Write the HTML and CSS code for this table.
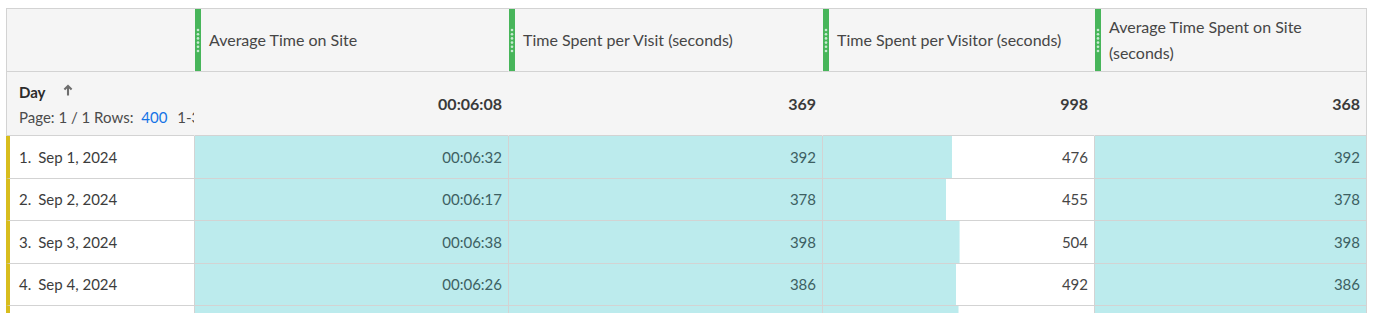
FILE: index.html
```html
<!DOCTYPE html>
<html lang="en">
<head>
<meta charset="utf-8">
<title>Freeform table</title>
<link rel="stylesheet" href="styles.css">
</head>
<body>
<div class="table">
  <div class="row head">
    <div class="cell corner"></div>
    <div class="cell hcol">
      <span class="grip"><svg width="4" height="25" viewBox="0 0 4 25"><circle cx="2" cy="2" r="1.3"/><circle cx="2" cy="6.2" r="1.3"/><circle cx="2" cy="10.4" r="1.3"/><circle cx="2" cy="14.6" r="1.3"/><circle cx="2" cy="18.8" r="1.3"/><circle cx="2" cy="23" r="1.3"/></svg></span>
      <span class="htitle">Average Time on Site</span>
    </div>
    <div class="cell hcol">
      <span class="grip"><svg width="4" height="25" viewBox="0 0 4 25"><circle cx="2" cy="2" r="1.3"/><circle cx="2" cy="6.2" r="1.3"/><circle cx="2" cy="10.4" r="1.3"/><circle cx="2" cy="14.6" r="1.3"/><circle cx="2" cy="18.8" r="1.3"/><circle cx="2" cy="23" r="1.3"/></svg></span>
      <span class="htitle">Time Spent per Visit (seconds)</span>
    </div>
    <div class="cell hcol">
      <span class="grip"><svg width="4" height="25" viewBox="0 0 4 25"><circle cx="2" cy="2" r="1.3"/><circle cx="2" cy="6.2" r="1.3"/><circle cx="2" cy="10.4" r="1.3"/><circle cx="2" cy="14.6" r="1.3"/><circle cx="2" cy="18.8" r="1.3"/><circle cx="2" cy="23" r="1.3"/></svg></span>
      <span class="htitle">Time Spent per Visitor (seconds)</span>
    </div>
    <div class="cell hcol">
      <span class="grip"><svg width="4" height="25" viewBox="0 0 4 25"><circle cx="2" cy="2" r="1.3"/><circle cx="2" cy="6.2" r="1.3"/><circle cx="2" cy="10.4" r="1.3"/><circle cx="2" cy="14.6" r="1.3"/><circle cx="2" cy="18.8" r="1.3"/><circle cx="2" cy="23" r="1.3"/></svg></span>
      <span class="htitle">Average Time Spent on Site (seconds)</span>
    </div>
  </div>

  <div class="row summary">
    <div class="cell dim">
      <div class="dim-title">Day <svg class="sort" width="10" height="12" viewBox="0 0 10 12"><path d="M5 11.5V2.2M1.4 5.6L5 2l3.6 3.6" fill="none" stroke="#6e6e6e" stroke-width="2.1"/></svg></div>
      <div class="pager">Page: 1 / 1 Rows: <span class="link">400</span> <span class="range">1-30 of 30</span></div>
    </div>
    <div class="cell total">00:06:08</div>
    <div class="cell total">369</div>
    <div class="cell total">998</div>
    <div class="cell total">368</div>
  </div>

  <div class="row data">
    <div class="cell item"><span class="num">1.</span>Sep 1, 2024</div>
    <div class="cell val on" style="--w:100%">00:06:32</div>
    <div class="cell val on" style="--w:100%">392</div>
    <div class="cell val" style="--w:47.6%">476</div>
    <div class="cell val on" style="--w:100%">392</div>
  </div>
  <div class="row data">
    <div class="cell item"><span class="num">2.</span>Sep 2, 2024</div>
    <div class="cell val on" style="--w:100%">00:06:17</div>
    <div class="cell val on" style="--w:100%">378</div>
    <div class="cell val" style="--w:45.5%">455</div>
    <div class="cell val on" style="--w:100%">378</div>
  </div>
  <div class="row data">
    <div class="cell item"><span class="num">3.</span>Sep 3, 2024</div>
    <div class="cell val on" style="--w:100%">00:06:38</div>
    <div class="cell val on" style="--w:100%">398</div>
    <div class="cell val" style="--w:50.4%">504</div>
    <div class="cell val on" style="--w:100%">398</div>
  </div>
  <div class="row data">
    <div class="cell item"><span class="num">4.</span>Sep 4, 2024</div>
    <div class="cell val on" style="--w:100%">00:06:26</div>
    <div class="cell val on" style="--w:100%">386</div>
    <div class="cell val" style="--w:49.2%">492</div>
    <div class="cell val on" style="--w:100%">386</div>
  </div>
  <div class="row data">
    <div class="cell item"><span class="num">5.</span>Sep 5, 2024</div>
    <div class="cell val on" style="--w:100%">00:06:30</div>
    <div class="cell val on" style="--w:100%">390</div>
    <div class="cell val" style="--w:50%">500</div>
    <div class="cell val on" style="--w:100%">390</div>
  </div>
</div>
</body>
</html>
```

FILE: styles.css
```css
html, body {
  margin: 0;
  background: #ffffff;
  overflow: hidden;
}

body {
  font-family: Lato, "Open Sans", sans-serif;
  color: #4b4b4b;
}

.table {
  margin: 8px 0 0 6px;
  width: 1361px;
  border-top: 1px solid #d3d3d3;
}

.row {
  display: grid;
  grid-template-columns: 189px 314px 314px 272px 272px;
}

.cell {
  box-sizing: border-box;
  border-bottom: 1px solid #d3d3d3;
  border-right: 1px solid #d3d3d3;
  min-width: 0;
}

.row > .cell:first-child {
  border-left: 1px solid #d3d3d3;
}

/* header row */
.head .cell,
.summary .cell {
  background: #f5f5f5;
  border-right-color: transparent;
}

.head .cell:last-child,
.summary .cell:last-child {
  border-right-color: #d3d3d3;
}

.head .cell {
  height: 63px;
}

.hcol {
  display: flex;
}

.grip {
  flex: none;
  width: 6px;
  background: #47b55a;
  display: flex;
  align-items: center;
  justify-content: center;
}

.grip svg {
  fill: #c6ead0;
  display: block;
}

.htitle {
  align-self: center;
  padding: 0 10px 0 8px;
  font-size: 16px;
  line-height: 26px;
  color: #464646;
}

/* summary row */
.summary .cell {
  height: 64px;
}

.dim {
  padding: 9px 0 0 12px;
  overflow: hidden;
  white-space: nowrap;
}

.dim-title {
  font-size: 15px;
  font-weight: 700;
  line-height: 22px;
  color: #2c2c2c;
  display: flex;
  align-items: center;
}

.sort {
  margin-left: 17px;
  margin-top: -4px;
}

.pager {
  margin-top: 3px;
  font-size: 15px;
  line-height: 22px;
  color: #4b4b4b;
}

.link {
  color: #1473e6;
  margin: 0 6px 0 4px;
}

.total {
  display: flex;
  align-items: center;
  justify-content: flex-end;
  padding-right: 6px;
  font-size: 16px;
  font-weight: 700;
  color: #3a3a3a;
}

/* data rows */
.data .cell {
  height: 42.5px;
  font-size: 15px;
  display: flex;
  align-items: center;
}

.row.data > .cell:first-child {
  border-left: 4px solid #d8bd1d;
}

.item {
  padding-left: 9px;
  white-space: nowrap;
  color: #3c3c3c;
}

.num {
  margin-right: 7px;
}

.val {
  justify-content: flex-end;
  padding-right: 6px;
  font-size: 15.5px;
  color: #464646;
  background-image: linear-gradient(#bcebed, #bcebed);
  background-repeat: no-repeat;
  background-size: var(--w) 100%;
}

.val.on {
  color: #3d6062;
}
```
